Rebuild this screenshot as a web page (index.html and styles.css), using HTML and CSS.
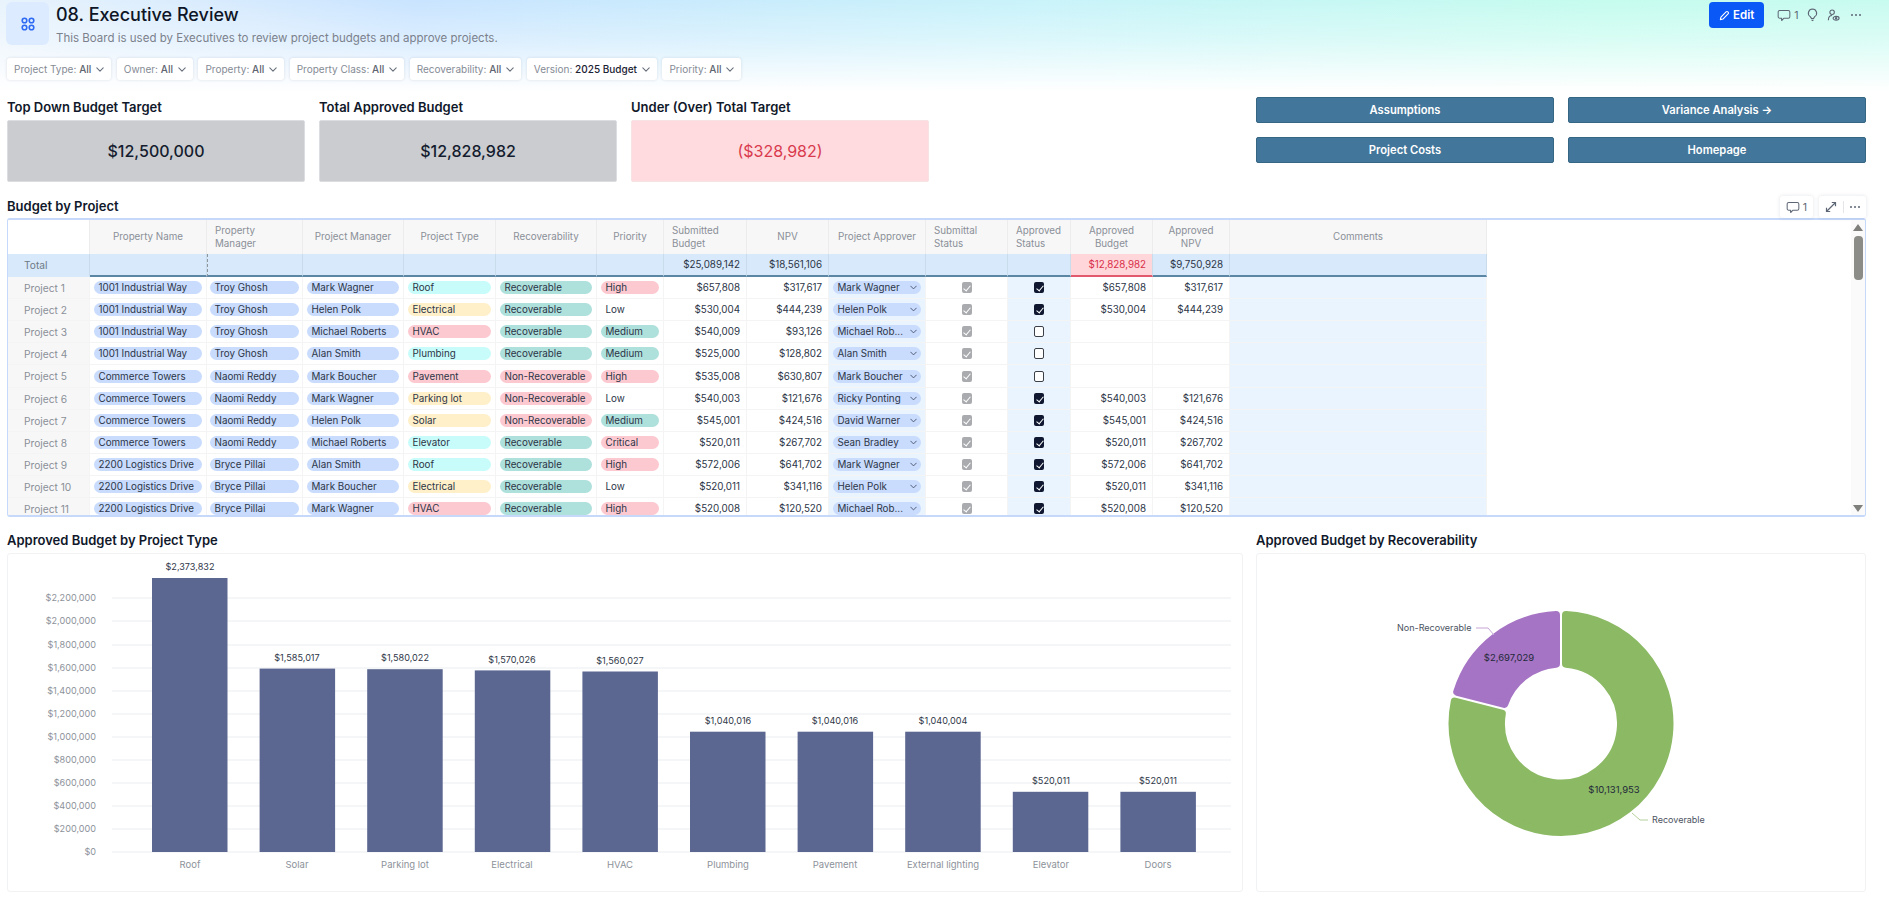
FILE: index.html
```html
<!DOCTYPE html>
<html lang="en">
<head>
<meta charset="utf-8">
<title>08. Executive Review</title>
<link rel="stylesheet" href="styles.css">
</head>
<body>
<svg class="defs" width="0" height="0" aria-hidden="true">
  <symbol id="chev" viewBox="0 0 10 6"><path d="M1 1l4 4 4-4" fill="none" stroke="currentColor" stroke-width="1.3" stroke-linecap="round" stroke-linejoin="round"/></symbol>
  <symbol id="comment" viewBox="0 0 18 16"><path d="M3.5 1.5h11a2 2 0 0 1 2 2v6a2 2 0 0 1-2 2H9l-3 3v-3H3.5a2 2 0 0 1-2-2v-6a2 2 0 0 1 2-2z" fill="none" stroke="currentColor" stroke-width="1.3" stroke-linejoin="round"/></symbol>
</svg>
<div class="page">
  <header class="top">
    <div class="board-icon">
      <svg width="14" height="14" viewBox="0 0 14 14" fill="none" stroke="#2f6bf2" stroke-width="1.6"><circle cx="3.5" cy="3.5" r="2.3"/><circle cx="10.5" cy="3.5" r="2.3"/><circle cx="3.5" cy="10.5" r="2.3"/><circle cx="10.5" cy="10.5" r="2.3"/></svg>
    </div>
    <div class="titles">
      <h1>08. Executive Review</h1>
      <p>This Board is used by Executives to review project budgets and approve projects.</p>
    </div>
    <div class="actions">
      <button class="edit"><svg width="11" height="11" viewBox="0 0 12 12" fill="none" stroke="#fff" stroke-width="1.2" stroke-linejoin="round"><path d="M1.5 10.5l.6-2.8 5.6-5.6a1.4 1.4 0 0 1 2 0l.2.2a1.4 1.4 0 0 1 0 2L4.300 9.900z"/></svg>Edit</button>
      <span class="comment-act"><svg width="14" height="13"><use href="#comment"/></svg>1</span>
      <svg class="act bulb" width="11" height="14" viewBox="0 0 12 15" fill="none" stroke="currentColor" stroke-width="1.2"><path d="M6 1a4.500 4.500 0 0 0-2.400 8.300L5 11.500h2l1.400-2.200A4.500 4.500 0 0 0 6 1z"/><path d="M5 13.500h2"/></svg>
      <svg class="act who" width="13" height="13" viewBox="0 0 14 14" fill="none" stroke="currentColor" stroke-width="1.200"><circle cx="5.500" cy="3.500" r="2.400"/><path d="M1.500 12c0-3 1.500-5 4-5"/><ellipse cx="9.800" cy="10" rx="3.200" ry="2"/><circle cx="9.800" cy="10" r=".7" fill="currentColor"/></svg>
      <span class="dots"><i></i><i></i><i></i></span>
    </div>
  </header>

  <div class="filters">
    <span class="filter">Project Type: <b>All</b><svg width="8" height="5"><use href="#chev"/></svg></span>
    <span class="filter">Owner: <b>All</b><svg width="8" height="5"><use href="#chev"/></svg></span>
    <span class="filter">Property: <b>All</b><svg width="8" height="5"><use href="#chev"/></svg></span>
    <span class="filter">Property Class: <b>All</b><svg width="8" height="5"><use href="#chev"/></svg></span>
    <span class="filter">Recoverability: <b>All</b><svg width="8" height="5"><use href="#chev"/></svg></span>
    <span class="filter">Version: <b class="strong">2025 Budget</b><svg width="8" height="5"><use href="#chev"/></svg></span>
    <span class="filter">Priority: <b>All</b><svg width="8" height="5"><use href="#chev"/></svg></span>
  </div>

  <section class="summary">
    <div class="kpi"><h2>Top Down Budget Target</h2><div class="kpi-box">$12,500,000</div></div>
    <div class="kpi"><h2>Total Approved Budget</h2><div class="kpi-box">$12,828,982</div></div>
    <div class="kpi"><h2>Under (Over) Total Target</h2><div class="kpi-box over">($328,982)</div></div>
    <div class="links">
      <a class="link">Assumptions</a>
      <a class="link">Variance Analysis →</a>
      <a class="link">Project Costs</a>
      <a class="link">Homepage</a>
    </div>
  </section>

  <div class="table-head">
    <h2>Budget by Project</h2>
    <div class="tools">
      <span class="tool tool-c"><svg width="14" height="13"><use href="#comment"/></svg>1</span>
      <span class="tool tool-e">
        <svg width="12" height="12" viewBox="0 0 12 12" fill="none" stroke="currentColor" stroke-width="1.200"><path d="M1.500 10.500l9-9M6.800 1.500h3.700v3.700M1.500 6.800v3.700h3.700"/></svg>
        <em></em>
        <span class="dots"><i></i><i></i><i></i></span>
      </span>
    </div>
  </div>

  <div class="grid-wrap">
    <div class="grid-clip">
      <table class="grid">
        <thead>
          <tr>
            <th class="corner"></th>
            <th>Property Name</th><th class="l">Property<br>Manager</th><th>Project Manager</th><th>Project Type</th><th>Recoverability</th><th>Priority</th>
            <th class="l">Submitted<br>Budget</th><th>NPV</th><th>Project Approver</th><th class="l">Submittal<br>Status</th><th class="l">Approved<br>Status</th><th>Approved<br>Budget</th><th>Approved<br>NPV</th><th>Comments</th>
          </tr>
          <tr class="total">
            <td class="rh">Total</td><td></td><td class="mark"></td><td></td><td></td><td></td><td></td>
            <td class="n">$25,089,142</td><td class="n">$18,561,106</td><td></td><td></td><td></td><td class="n red">$12,828,982</td><td class="n">$9,750,928</td><td></td>
          </tr>
        </thead>
        <tbody>
          <tr><td class="rh">Project 1</td><td><span class="p blue">1001 Industrial Way</span></td><td><span class="p blue">Troy Ghosh</span></td><td><span class="p blue">Mark Wagner</span></td><td><span class="p cyan">Roof</span></td><td><span class="p teal">Recoverable</span></td><td><span class="p pink">High</span></td><td class="n">$657,808</td><td class="n">$317,617</td><td class="hl"><span class="p blue sel">Mark Wagner<svg width="7" height="5"><use href="#chev"/></svg></span></td><td class="c"><i class="cb sub"></i></td><td class="c hl"><i class="cb on"></i></td><td class="n">$657,808</td><td class="n">$317,617</td><td class="hl"></td></tr>
          <tr><td class="rh">Project 2</td><td><span class="p blue">1001 Industrial Way</span></td><td><span class="p blue">Troy Ghosh</span></td><td><span class="p blue">Helen Polk</span></td><td><span class="p yellow">Electrical</span></td><td><span class="p teal">Recoverable</span></td><td><span class="p">Low</span></td><td class="n">$530,004</td><td class="n">$444,239</td><td class="hl"><span class="p blue sel">Helen Polk<svg width="7" height="5"><use href="#chev"/></svg></span></td><td class="c"><i class="cb sub"></i></td><td class="c hl"><i class="cb on"></i></td><td class="n">$530,004</td><td class="n">$444,239</td><td class="hl"></td></tr>
          <tr><td class="rh">Project 3</td><td><span class="p blue">1001 Industrial Way</span></td><td><span class="p blue">Troy Ghosh</span></td><td><span class="p blue">Michael Roberts</span></td><td><span class="p pink">HVAC</span></td><td><span class="p teal">Recoverable</span></td><td><span class="p teal">Medium</span></td><td class="n">$540,009</td><td class="n">$93,126</td><td class="hl"><span class="p blue sel">Michael Rob...<svg width="7" height="5"><use href="#chev"/></svg></span></td><td class="c"><i class="cb sub"></i></td><td class="c hl"><i class="cb"></i></td><td></td><td></td><td class="hl"></td></tr>
          <tr><td class="rh">Project 4</td><td><span class="p blue">1001 Industrial Way</span></td><td><span class="p blue">Troy Ghosh</span></td><td><span class="p blue">Alan Smith</span></td><td><span class="p cyan">Plumbing</span></td><td><span class="p teal">Recoverable</span></td><td><span class="p teal">Medium</span></td><td class="n">$525,000</td><td class="n">$128,802</td><td class="hl"><span class="p blue sel">Alan Smith<svg width="7" height="5"><use href="#chev"/></svg></span></td><td class="c"><i class="cb sub"></i></td><td class="c hl"><i class="cb"></i></td><td></td><td></td><td class="hl"></td></tr>
          <tr><td class="rh">Project 5</td><td><span class="p blue">Commerce Towers</span></td><td><span class="p blue">Naomi Reddy</span></td><td><span class="p blue">Mark Boucher</span></td><td><span class="p pink">Pavement</span></td><td><span class="p pink">Non-Recoverable</span></td><td><span class="p pink">High</span></td><td class="n">$535,008</td><td class="n">$630,807</td><td class="hl"><span class="p blue sel">Mark Boucher<svg width="7" height="5"><use href="#chev"/></svg></span></td><td class="c"><i class="cb sub"></i></td><td class="c hl"><i class="cb"></i></td><td></td><td></td><td class="hl"></td></tr>
          <tr><td class="rh">Project 6</td><td><span class="p blue">Commerce Towers</span></td><td><span class="p blue">Naomi Reddy</span></td><td><span class="p blue">Mark Wagner</span></td><td><span class="p yellow">Parking lot</span></td><td><span class="p pink">Non-Recoverable</span></td><td><span class="p">Low</span></td><td class="n">$540,003</td><td class="n">$121,676</td><td class="hl"><span class="p blue sel">Ricky Ponting<svg width="7" height="5"><use href="#chev"/></svg></span></td><td class="c"><i class="cb sub"></i></td><td class="c hl"><i class="cb on"></i></td><td class="n">$540,003</td><td class="n">$121,676</td><td class="hl"></td></tr>
          <tr><td class="rh">Project 7</td><td><span class="p blue">Commerce Towers</span></td><td><span class="p blue">Naomi Reddy</span></td><td><span class="p blue">Helen Polk</span></td><td><span class="p yellow">Solar</span></td><td><span class="p pink">Non-Recoverable</span></td><td><span class="p teal">Medium</span></td><td class="n">$545,001</td><td class="n">$424,516</td><td class="hl"><span class="p blue sel">David Warner<svg width="7" height="5"><use href="#chev"/></svg></span></td><td class="c"><i class="cb sub"></i></td><td class="c hl"><i class="cb on"></i></td><td class="n">$545,001</td><td class="n">$424,516</td><td class="hl"></td></tr>
          <tr><td class="rh">Project 8</td><td><span class="p blue">Commerce Towers</span></td><td><span class="p blue">Naomi Reddy</span></td><td><span class="p blue">Michael Roberts</span></td><td><span class="p cyan">Elevator</span></td><td><span class="p teal">Recoverable</span></td><td><span class="p pink">Critical</span></td><td class="n">$520,011</td><td class="n">$267,702</td><td class="hl"><span class="p blue sel">Sean Bradley<svg width="7" height="5"><use href="#chev"/></svg></span></td><td class="c"><i class="cb sub"></i></td><td class="c hl"><i class="cb on"></i></td><td class="n">$520,011</td><td class="n">$267,702</td><td class="hl"></td></tr>
          <tr><td class="rh">Project 9</td><td><span class="p blue">2200 Logistics Drive</span></td><td><span class="p blue">Bryce Pillai</span></td><td><span class="p blue">Alan Smith</span></td><td><span class="p cyan">Roof</span></td><td><span class="p teal">Recoverable</span></td><td><span class="p pink">High</span></td><td class="n">$572,006</td><td class="n">$641,702</td><td class="hl"><span class="p blue sel">Mark Wagner<svg width="7" height="5"><use href="#chev"/></svg></span></td><td class="c"><i class="cb sub"></i></td><td class="c hl"><i class="cb on"></i></td><td class="n">$572,006</td><td class="n">$641,702</td><td class="hl"></td></tr>
          <tr><td class="rh">Project 10</td><td><span class="p blue">2200 Logistics Drive</span></td><td><span class="p blue">Bryce Pillai</span></td><td><span class="p blue">Mark Boucher</span></td><td><span class="p yellow">Electrical</span></td><td><span class="p teal">Recoverable</span></td><td><span class="p">Low</span></td><td class="n">$520,011</td><td class="n">$341,116</td><td class="hl"><span class="p blue sel">Helen Polk<svg width="7" height="5"><use href="#chev"/></svg></span></td><td class="c"><i class="cb sub"></i></td><td class="c hl"><i class="cb on"></i></td><td class="n">$520,011</td><td class="n">$341,116</td><td class="hl"></td></tr>
          <tr><td class="rh">Project 11</td><td><span class="p blue">2200 Logistics Drive</span></td><td><span class="p blue">Bryce Pillai</span></td><td><span class="p blue">Mark Wagner</span></td><td><span class="p pink">HVAC</span></td><td><span class="p teal">Recoverable</span></td><td><span class="p pink">High</span></td><td class="n">$520,008</td><td class="n">$120,520</td><td class="hl"><span class="p blue sel">Michael Rob...<svg width="7" height="5"><use href="#chev"/></svg></span></td><td class="c"><i class="cb sub"></i></td><td class="c hl"><i class="cb on"></i></td><td class="n">$520,008</td><td class="n">$120,520</td><td class="hl"></td></tr>
        </tbody>
      </table>
    </div>
    <div class="scrollbar"><i class="up"></i><i class="thumb"></i><i class="down"></i></div>
  </div>

  <section class="charts">
    <div class="chart-col">
      <h2>Approved Budget by Project Type</h2>
      <div class="panel">
        <svg class="chart" viewBox="0 0 1236 339" width="1236" height="339">
          <g class="gridlines">
            <path d="M105 45h1119M105 68h1119M105 92h1119M105 115h1119M105 138h1119M105 161h1119M105 184h1119M105 207h1119M105 230h1119M105 253h1119M105 276h1119M105 299h1119"/>
          </g>
          <g class="ylab">
            <text x="89" y="48">$2,200,000</text><text x="89" y="71">$2,000,000</text><text x="89" y="95">$1,800,000</text><text x="89" y="118">$1,600,000</text><text x="89" y="141">$1,400,000</text><text x="89" y="164">$1,200,000</text><text x="89" y="187">$1,000,000</text><text x="89" y="210">$800,000</text><text x="89" y="233">$600,000</text><text x="89" y="256">$400,000</text><text x="89" y="279">$200,000</text><text x="89" y="302">$0</text>
          </g>
          <g class="bars">
            <rect x="145" y="25" width="75.500" height="274"/>
            <rect x="252.600" y="115.600" width="75.500" height="183.400"/>
            <rect x="360.200" y="116.200" width="75.500" height="182.800"/>
            <rect x="467.800" y="117.400" width="75.500" height="181.600"/>
            <rect x="575.400" y="118.500" width="75.500" height="180.500"/>
            <rect x="683" y="178.700" width="75.500" height="120.300"/>
            <rect x="790.600" y="178.700" width="75.500" height="120.300"/>
            <rect x="898.200" y="178.700" width="75.500" height="120.300"/>
            <rect x="1005.800" y="238.800" width="75.500" height="60.200"/>
            <rect x="1113.400" y="238.800" width="75.500" height="60.200"/>
          </g>
          <g class="vlab">
            <text x="183" y="17">$2,373,832</text><text x="290" y="108">$1,585,017</text><text x="398" y="108">$1,580,022</text><text x="505" y="110">$1,570,026</text><text x="613" y="111">$1,560,027</text><text x="721" y="171">$1,040,016</text><text x="828" y="171">$1,040,016</text><text x="936" y="171">$1,040,004</text><text x="1044" y="231">$520,011</text><text x="1151" y="231">$520,011</text>
          </g>
          <g class="xlab">
            <text x="183" y="315">Roof</text><text x="290" y="315">Solar</text><text x="398" y="315">Parking lot</text><text x="505" y="315">Electrical</text><text x="613" y="315">HVAC</text><text x="721" y="315">Plumbing</text><text x="828" y="315">Pavement</text><text x="936" y="315">External lighting</text><text x="1044" y="315">Elevator</text><text x="1151" y="315">Doors</text>
          </g>
        </svg>
      </div>
    </div>
    <div class="chart-col">
      <h2>Approved Budget by Recoverability</h2>
      <div class="panel">
        <svg class="chart" viewBox="0 0 610 339" width="610" height="339">
          <g transform="translate(305 170.500)">
            <path class="pie-p" d="M-5 -108.380A108.500 108.500 0 0 0 -103.790 -31.620L-56.700 -19.610A60 60 0 0 1 -5 -59.790Z"/>
            <path class="pie-g" d="M5 -108.380A108.500 108.500 0 1 1 -106.260 -21.930L-59.170 -9.920A60 60 0 1 0 5 -59.790Z"/>
          </g>
          <path class="lead-p" d="M220 75h12l6 7"/>
          <path class="lead-g" d="M376 260l8 7h8"/>
          <text class="pie-out" x="215.500" y="78" text-anchor="end">Non-Recoverable</text>
          <text class="pie-out" x="396" y="270">Recoverable</text>
          <text class="pie-in" x="253" y="108">$2,697,029</text>
          <text class="pie-in" x="358" y="240">$10,131,953</text>
        </svg>
      </div>
    </div>
  </section>
</div>
</body>
</html>
```
FILE: styles.css
```css
* { box-sizing: border-box; }
html, body { margin: 0; height: 100%; }
body {
  font-family: Inter, "Noto Sans", "Liberation Sans", sans-serif;
  color: #1a2233;
  background: #fff;
  overflow: hidden;
}
.defs { position: absolute; }
.page {
  width: 1889px;
  height: 900px;
  padding: 2px 23px 0 7px;
  background:
    linear-gradient(to bottom, rgba(255,255,255,0) 0, rgba(255,255,255,.35) 40px, #fff 92px) no-repeat,
    linear-gradient(90deg, #e8f3fc 0, #c9e4ff 22%, #c9f3fa 55%, #c5fcee 85%, #c8fbf0 100%) no-repeat;
  background-size: 100% 92px;
}
h1, h2, p { margin: 0; }

/* top bar */
.top { display: flex; height: 43px; }
.board-icon {
  width: 43px; height: 43px;
  margin-left: -1px;
  border-radius: 6px;
  background: #dcebff;
  display: flex; align-items: center; justify-content: center;
}
.titles { margin-left: 7px; }
.titles h1 { font-size: 18px; font-weight: 500; line-height: 26px; color: #0e1526; }
.titles p { font-size: 11.5px; line-height: 16px; margin-top: 2px; color: #7b818c; }
.actions {
  margin-left: auto;
  height: 26px;
  display: flex; align-items: center;
  color: #5d6675;
  margin-right: 5px;
}
.edit {
  width: 55px; height: 26px;
  border: 0; border-radius: 4px;
  background: #0a58f5;
  color: #fff;
  font: 600 11.5px Inter, sans-serif;
  display: flex; align-items: center; justify-content: center; gap: 3px;
  margin-right: 13px;
}
.act { flex: none; }
.comment-act { display: inline-flex; align-items: center; gap: 3px; font-size: 10.5px; margin-right: 8px; }
.bulb { margin-right: 9px; }
.who { margin-right: 11px; }
.dots { display: inline-flex; gap: 1.500px; }
.dots i { width: 2.500px; height: 2.500px; border-radius: 50%; background: currentColor; }

/* filters */
.filters { display: flex; gap: 5.500px; margin-top: 13px; }
.filter {
  height: 22px;
  padding: 0 7px;
  background: #fff;
  border-radius: 3px;
  box-shadow: 0 0 3px rgba(20,40,80,.14);
  font-size: 10px;
  color: #858b95;
  display: inline-flex; align-items: center;
  white-space: pre;
}
.filter b { font-weight: 500; color: #5d6470; }
.filter b.strong { color: #1a2233; }
.filter svg { margin-left: 5px; color: #666e7a; }

/* summary */
.summary {
  display: grid;
  grid-template-columns: repeat(3, 298px) 1fr;
  column-gap: 14px;
  margin-top: 17px;
}
h2 { font-size: 13px; font-weight: 600; color: #10182a; line-height: 21px; padding-bottom: 2px; }
.kpi-box {
  height: 62px;
  background: #cbccd0;
  border: 1px solid #dcdde0;
  border-radius: 2px;
  display: flex; align-items: center; justify-content: center;
  font-size: 16px;
  font-weight: 500;
  color: #141c2e;
}
.kpi-box.over { background: #ffdade; border-color: #f7e2e4; color: #d93a4e; font-weight: 400; }
.links {
  display: grid;
  grid-template-columns: 298px 298px;
  column-gap: 14px;
  row-gap: 14px;
  grid-auto-rows: 26px;
  justify-content: end;
}
.link {
  background: #42769a;
  border: 1px solid #356684;
  border-radius: 2px;
  color: #fff;
  font-size: 11.2px;
  font-weight: 600;
  display: flex; align-items: center; justify-content: center;
}

/* table */
.table-head {
  display: flex; justify-content: space-between; align-items: center;
  height: 22px;
  margin-top: 14px;
}
.tools { display: flex; gap: 6px; height: 22px; color: #5d6675; }
.tool {
  display: inline-flex; align-items: center; justify-content: center;
  background: #fff;
  border-radius: 3px;
  box-shadow: 0 0 4px rgba(20,40,80,.12);
  font-size: 10.500px;
  height: 22px;
}
.tool-c { width: 33px; gap: 3px; }
.tool-e { width: 47px; gap: 6px; }
.tool-e em { width: 1px; height: 12px; background: #e3e5e8; }

.grid-wrap {
  display: flex;
  height: 299px;
  border: 1px solid #c6d9fa;
  border-width: 2px 1px;
  border-radius: 3px;
  overflow: hidden;
}
.grid-clip { flex: 1; overflow: hidden; }
.scrollbar {
  width: 14px;
  background: #fafafa;
  position: relative;
  display: flex; flex-direction: column; align-items: center;
}
.scrollbar .up, .scrollbar .down {
  width: 0; height: 0;
  border: 5px solid transparent;
  border-top-width: 0;
  border-bottom: 7px solid #7f7f7c;
  margin-top: 4px;
}
.scrollbar .down { transform: rotate(180deg); margin-top: auto; margin-bottom: 3px; }
.scrollbar .thumb {
  width: 9px; height: 44px;
  border-radius: 4px;
  background: #8b8b87;
  margin-top: 5px;
}
.grid {
  table-layout: fixed;
  border-collapse: separate;
  border-spacing: 0;
  width: 1479px;
  font-size: 9.800px;
  color: #2c3547;
}
.grid th:nth-child(1) { width: 82px; }
.grid th:nth-child(2) { width: 117px; }
.grid th:nth-child(3) { width: 96px; }
.grid th:nth-child(4) { width: 101px; }
.grid th:nth-child(5) { width: 92px; }
.grid th:nth-child(6) { width: 101px; }
.grid th:nth-child(7) { width: 67px; }
.grid th:nth-child(8) { width: 83px; }
.grid th:nth-child(9) { width: 82px; }
.grid th:nth-child(10) { width: 97px; }
.grid th:nth-child(11) { width: 82px; }
.grid th:nth-child(12) { width: 63px; }
.grid th:nth-child(13) { width: 82px; }
.grid th:nth-child(14) { width: 77px; }
.grid th:nth-child(15) { width: 257px; }
.grid th {
  height: 34px;
  padding: 0 7px 1px;
  background: #f7f7f7;
  border-right: 1px solid #ececec;
  font-weight: 400;
  line-height: 13px;
  color: #8a8f97;
  text-align: center;
}
.grid th.l { text-align: left; padding-left: 8px; }
.grid th.corner { background: #fff; }
.grid td {
  height: 22px;
  padding: 0;
  border-right: 1px solid #f4f4f4;
  border-bottom: 1px solid #f4f4f4;
  overflow: hidden;
  white-space: nowrap;
}
.grid tbody tr:nth-child(5) td { height: 23px; }
.grid .total td {
  height: 23px;
  padding-bottom: 1px;
  background: #d7e9fa;
  border-right: 1px solid #c9dcec;
  border-bottom: 2px solid #5b86a4;
}
.grid .total .rh { border-bottom: 1px solid #d7e9fa; color: #6f7a86; }
.grid .total .mark { border-left: 1px dashed #8e959c; }
.grid .total .red { background: #ffd6da; color: #d92f49; border-bottom-color: #e2586c; }
.rh { background: #f7f7f7; color: #8a8f97; font-size: 10.200px; padding-left: 16px !important; }
.n { text-align: right; padding-right: 6px !important; }
.c { text-align: center; }
.hl { background: #eaf4ff; }
.p {
  display: flex; align-items: center;
  height: 13px;
  margin: 0 4px;
  padding: 0 4.500px;
  border-radius: 7px;
}
td:nth-child(3) .p { margin-left: 3px; margin-right: 3px; }
.blue { background: #c9dcfd; }
.cyan { background: #c8fcfa; }
.yellow { background: #fff0c9; }
.pink { background: #fdc9d0; }
.teal { background: #aee0dc; }
.sel { justify-content: space-between; }
.sel svg { color: #45506a; flex: none; }
.cb {
  display: inline-block;
  position: relative;
  width: 10px; height: 11px;
  border: 1.500px solid #3b3f48;
  border-radius: 2px;
  background: #fff;
  vertical-align: middle;
}
.cb.on, .cb.sub { border: 0; }
.cb.on { background: #0f1830; }
.cb.sub { background: #a9abae; }
.cb.on::after, .cb.sub::after {
  content: "";
  position: absolute;
  left: 3.500px; top: 1.500px;
  width: 3px; height: 6px;
  border: solid #fff;
  border-width: 0 1.300px 1.300px 0;
  transform: rotate(40deg);
}

/* charts */
.charts {
  display: grid;
  grid-template-columns: 1236px 610px;
  column-gap: 13px;
  margin-top: 13px;
}
.panel {
  height: 339px;
  border: 1px solid #f1f2f4;
  border-radius: 3px;
  overflow: hidden;
}
.chart { display: block; margin: -1px; }
.gridlines path { stroke: #f2f3f5; stroke-width: 1.500; fill: none; }
.ylab text { text-anchor: end; font-size: 9.100px; fill: #8d929a; }
.xlab text { text-anchor: middle; font-size: 9.500px; fill: #8d929a; }
.vlab text { text-anchor: middle; font-size: 9.100px; fill: #2f3748; }
.bars rect { fill: #5c6791; }
.pie-p { fill: #a674c4; stroke: #a674c4; stroke-width: 8; stroke-linejoin: round; }
.pie-g { fill: #8cb964; stroke: #8cb964; stroke-width: 8; stroke-linejoin: round; }
.lead-p { stroke: #c4a6d6; fill: none; }
.lead-g { stroke: #b4d19a; fill: none; }
.pie-out { font-size: 9px; fill: #4b5261; }
.pie-in { font-size: 9.500px; fill: #232a3a; text-anchor: middle; }
```
